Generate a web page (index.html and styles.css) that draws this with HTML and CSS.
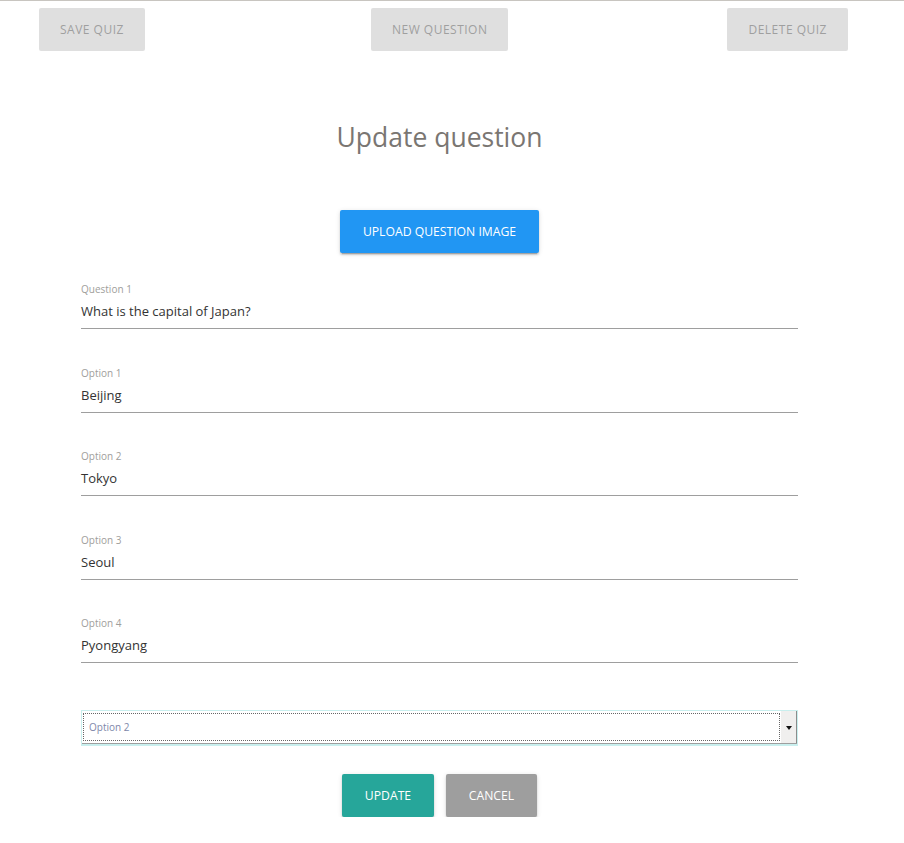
FILE: index.html
```html
<!DOCTYPE html>
<html>
<head>
<meta charset="utf-8">
<link rel="stylesheet" href="styles.css">
</head>
<body>
<div class="topbar">
  <button class="btn-flat">Save quiz</button>
  <button class="btn-flat mid">New question</button>
  <button class="btn-flat">Delete quiz</button>
</div>
<main class="main">
  <h1 class="title">Update question</h1>
  <div class="upload-row">
    <button class="btn btn-blue">Upload question image</button>
  </div>
  <div class="field first">
    <label class="field-label">Question 1</label>
    <div class="field-value">What is the capital of Japan?</div>
  </div>
  <div class="field">
    <label class="field-label">Option 1</label>
    <div class="field-value">Beijing</div>
  </div>
  <div class="field">
    <label class="field-label">Option 2</label>
    <div class="field-value">Tokyo</div>
  </div>
  <div class="field">
    <label class="field-label">Option 3</label>
    <div class="field-value">Seoul</div>
  </div>
  <div class="field">
    <label class="field-label">Option 4</label>
    <div class="field-value">Pyongyang</div>
  </div>
  <div class="select">
    <div class="select-inner">
      <div class="select-text">Option 2</div>
    </div>
    <div class="select-arrow"><span class="tri"></span></div>
  </div>
  <div class="actions">
    <button class="btn btn-teal">Update</button>
    <button class="btn btn-grey">Cancel</button>
  </div>
</main>
</body>
</html>
```
FILE: styles.css
```css
html, body {
  margin: 0;
  padding: 0;
  background: #fff;
}
body {
  font-family: "Open Sans", "Noto Sans", sans-serif;
  border-top: 1px solid #c8c5c0;
}
button {
  font-family: inherit;
  border: none;
  cursor: pointer;
}
.topbar {
  display: flex;
  justify-content: space-between;
  padding: 7px 56px 0 39px;
}
.btn-flat {
  height: 43px;
  padding: 0 21px;
  background: #dfdfdf;
  color: #9f9f9f;
  font-size: 12px;
  letter-spacing: 0.5px;
  text-transform: uppercase;
  border-radius: 2px;
}
.btn-flat.mid {
  margin-left: 7px;
}
.main {
  width: 717px;
  margin-left: 81px;
}
.title {
  margin: 70px 0 0;
  text-align: center;
  font-weight: 400;
  font-size: 26.5px;
  line-height: 32px;
  color: #7a7672;
}
.upload-row {
  display: flex;
  justify-content: center;
  margin-top: 57px;
}
.btn {
  height: 43px;
  padding: 0 22px;
  color: #fff;
  font-size: 12.2px;
  text-transform: uppercase;
  border-radius: 2px;
  box-shadow: 0 2px 2px 0 rgba(0,0,0,0.14), 0 1px 5px 0 rgba(0,0,0,0.12), 0 3px 1px -2px rgba(0,0,0,0.2);
}
.btn-blue {
  background: #2196f3;
  width: 199px;
  padding: 0;
}
.btn-teal {
  background: #26a69a;
  width: 92px;
  padding: 0;
}
.btn-grey {
  background: #9e9e9e;
  width: 91px;
  padding: 0;
}
.field {
  display: flex;
  flex-direction: column;
  border-bottom: 1px solid #9e9e9e;
  margin-top: 35.5px;
  height: 47px;
}
.field.first {
  margin-top: 28px;
}
.field-label {
  font-size: 10px;
  line-height: 14px;
  color: #a09e9b;
  margin-top: 1px;
}
.field-value {
  font-size: 13px;
  line-height: 18px;
  color: #333;
  margin-top: 6px;
}
.select {
  margin-top: 47px;
  height: 36px;
  display: flex;
  border: 1px solid #c9efee;
  box-sizing: border-box;
  border-bottom: 2px solid #c9efee;
  position: relative;
}
.select::after {
  content: "";
  position: absolute;
  left: 0;
  right: 0;
  bottom: 0;
  height: 1px;
  background: #9e9e9e;
}
.select-inner {
  flex: 1;
  margin: 2px 1px 3px 1px;
  border: 1px dotted #666;
  display: flex;
  align-items: center;
}
.select-text {
  font-size: 10px;
  color: #8088aa;
  padding-left: 5px;
}
.select-arrow {
  width: 15px;
  background: #f0efee;
  border-right: 1px solid #8c8c8c;
  display: flex;
  align-items: center;
  justify-content: center;
}
.tri {
  width: 0;
  height: 0;
  border-left: 3px solid transparent;
  border-right: 3px solid transparent;
  border-top: 4px solid #111;
}
.actions {
  display: flex;
  justify-content: center;
  gap: 12px;
  margin-top: 28px;
}
```
